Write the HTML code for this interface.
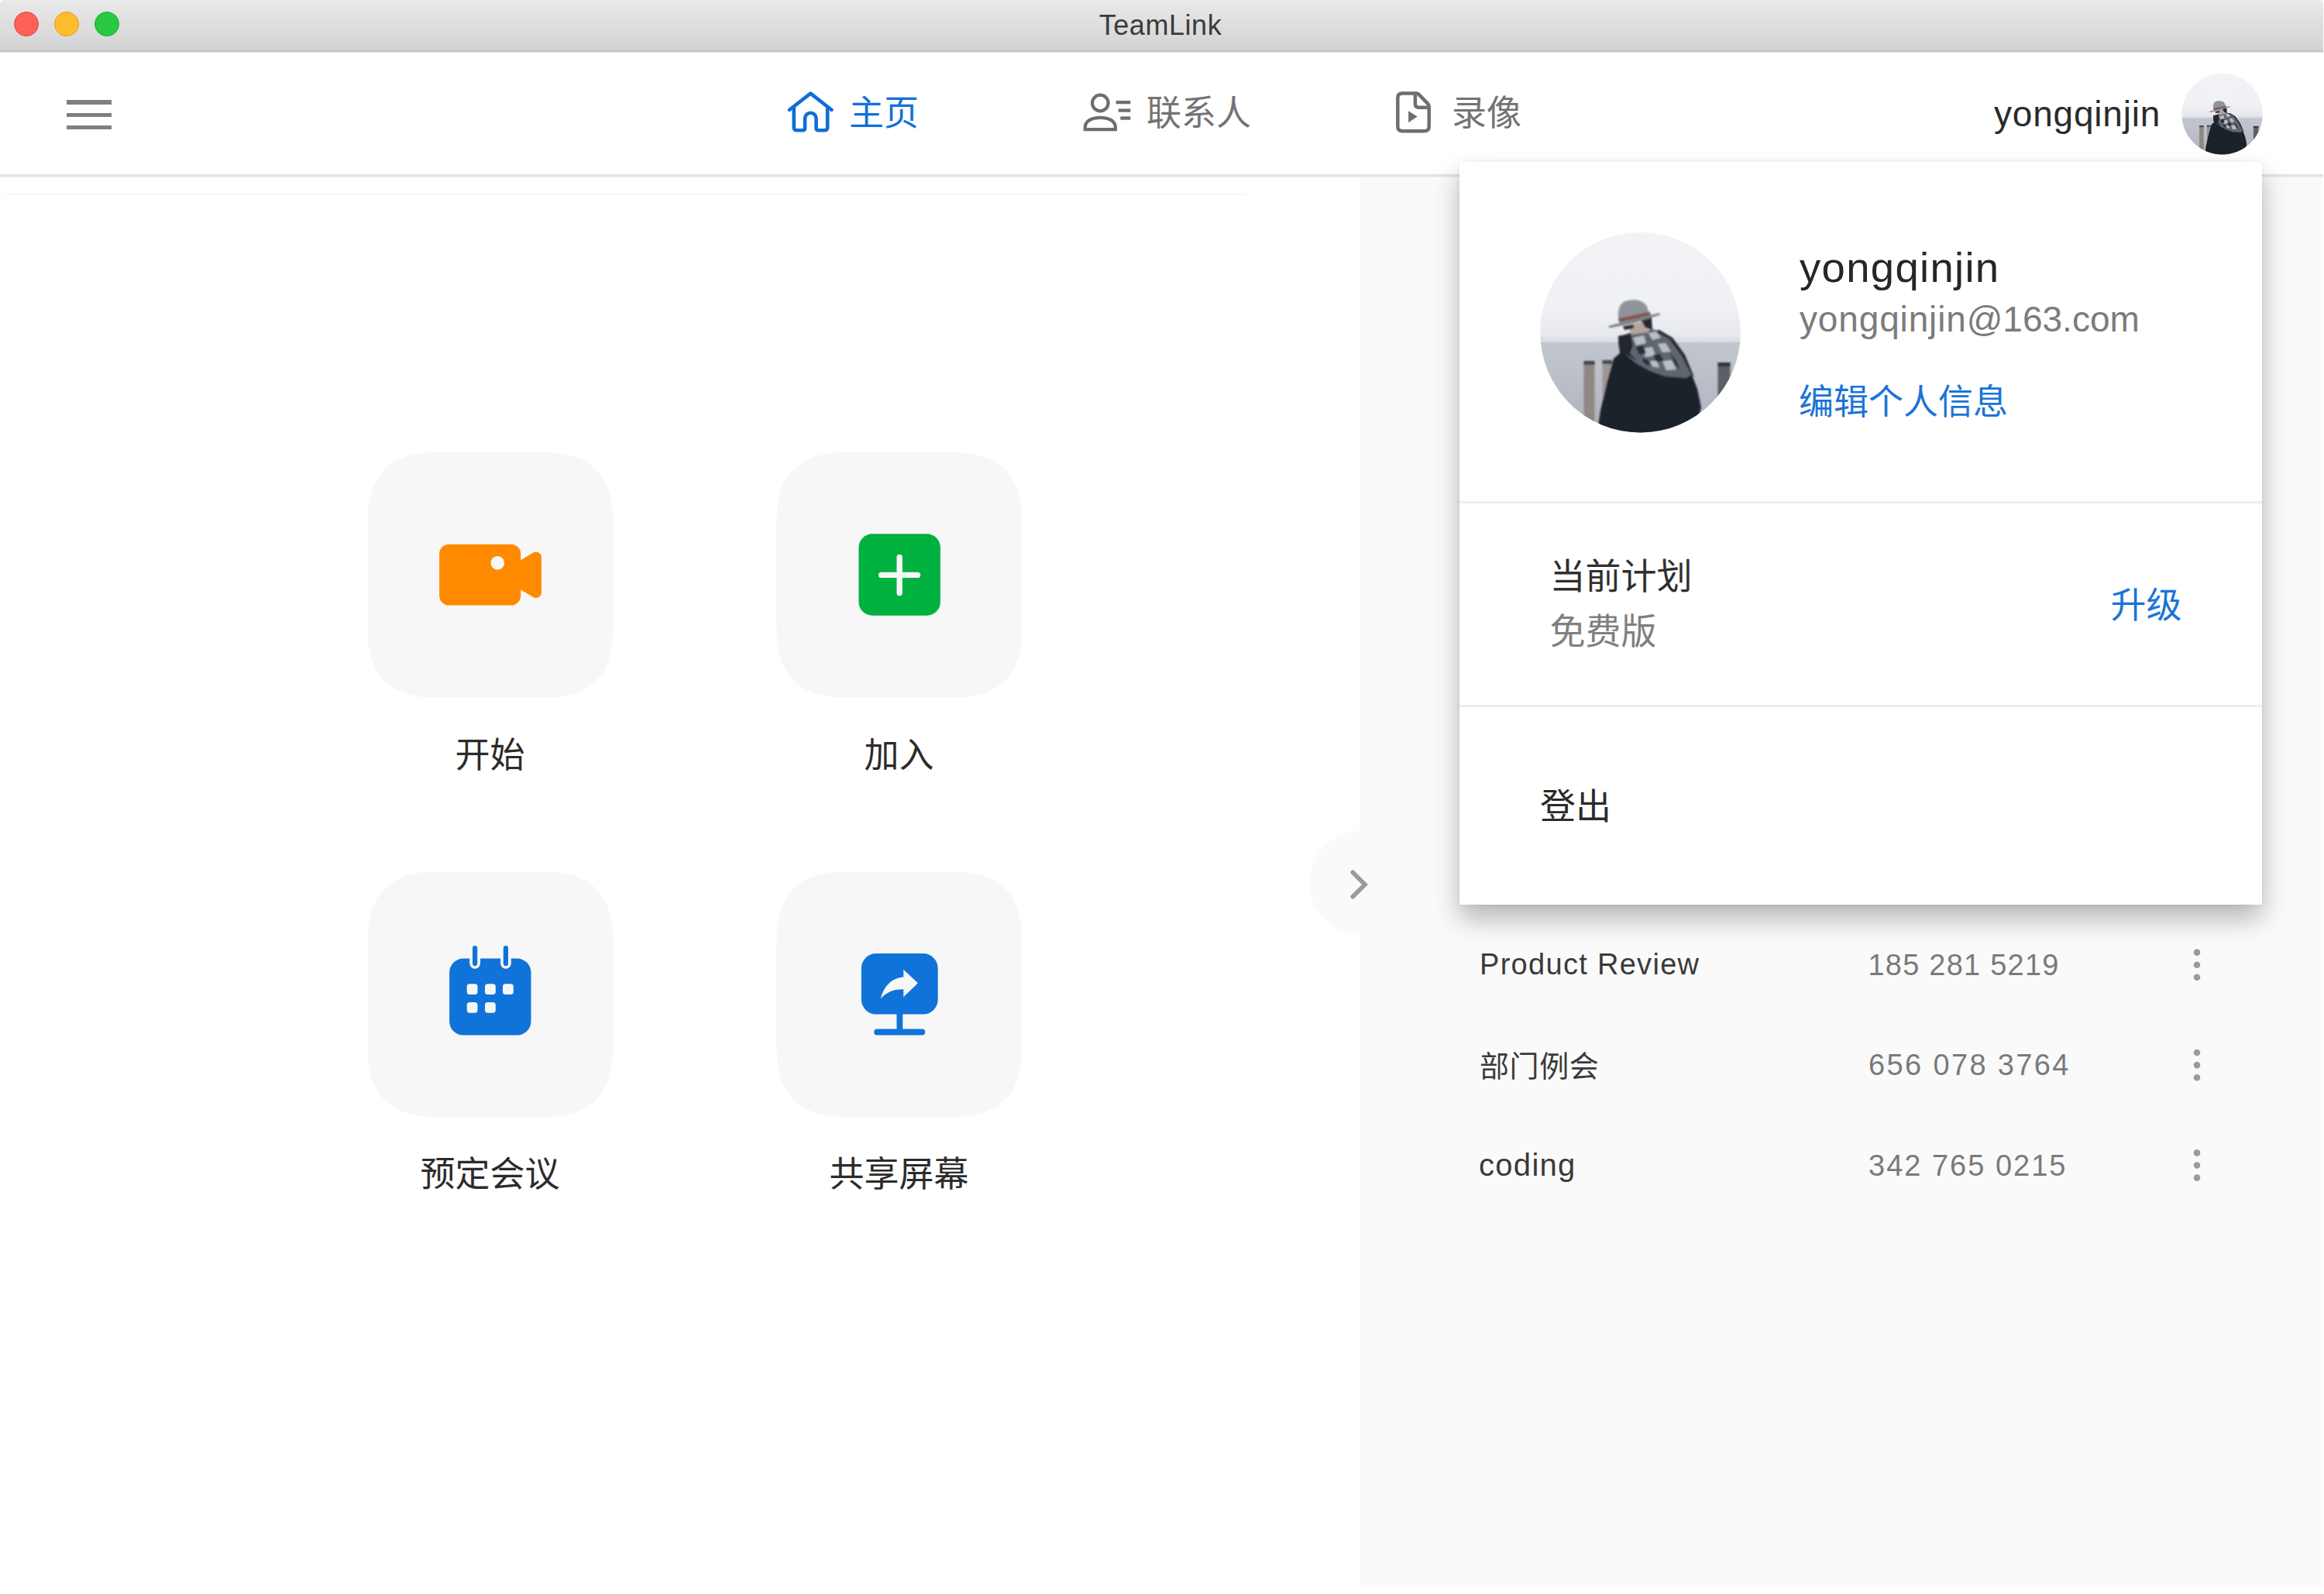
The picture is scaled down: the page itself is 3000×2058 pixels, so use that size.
<!DOCTYPE html>
<html lang="zh-CN">
<head>
<meta charset="utf-8">
<title>TeamLink</title>
<style>
*{box-sizing:border-box;margin:0;padding:0}
html,body{width:3000px;height:2058px;overflow:hidden;background:#fff}
body{position:relative;font-family:"Liberation Sans","Noto Sans CJK SC",sans-serif;color:#2b2b2b}
.abs{position:absolute}
.t{position:absolute;white-space:nowrap;line-height:1}
/* title bar */
#titlebar{position:absolute;left:0;top:0;width:2998.5px;height:67px;background:linear-gradient(#e9e9e9,#d3d3d3);border-bottom:2px solid #c3c3c3;border-radius:5px 5px 0 0;box-shadow:0 1px 0 #e4e4e4}
.tl{position:absolute;top:15px;width:32px;height:32px;border-radius:50%}
#title{left:0;width:2996px;text-align:center;top:15px;font-size:36px;letter-spacing:.55px;color:#3b3b3b}
/* header */
#header{position:absolute;left:0;top:68px;width:2998.5px;height:157px;background:#fff}
#hline{position:absolute;left:0;top:225px;width:2998.5px;height:4px;background:linear-gradient(#e0e0e0,#e2e2e2 45%,#ededed)}
.hb{position:absolute;left:86px;width:58px;height:5.4px;background:#7f7f7f}
.nav{font-size:45px;color:#737373}
.nav.on{color:#1071d8}
/* main */
#side{position:absolute;left:1754.5px;top:229px;width:1244px;height:1820px;background:#fafafa}
#hair{position:absolute;left:7px;top:250px;width:1601px;height:2px;background:#f6f6f6}
.tile{position:absolute;width:317px;height:317px;border-radius:82px;background:#f7f7f7}
.lbl{font-size:45px;color:#2b2b2b;text-align:center;width:317px}
/* list */
.row{font-size:38px}
.row.n{color:#3a3a3a}
.row.d{color:#7a7a7a}
.dot{position:absolute;width:7px;height:7px;border-radius:50%;background:#777}
/* popup */
#pop{position:absolute;left:1884px;top:209px;width:1036px;height:959px;background:#fff;border-radius:5px 5px 1px 1px;box-shadow:0 18px 34px rgba(0,0,0,.28),0 0 6px rgba(0,0,0,.06)}
.div{position:absolute;left:0;width:1036px;height:3px;background:#eeeeee}
</style>
</head>
<body>
<div id="titlebar">
  <div class="tl" style="left:18px;background:#fe5f57;border:1px solid #e2463f"></div>
  <div class="tl" style="left:70px;background:#febc2e;border:1px solid #e0a028"></div>
  <div class="tl" style="left:122px;background:#28c840;border:1px solid #1eab31"></div>
  <div class="t" id="title">TeamLink</div>
</div>
<div id="header">
  <div class="hb" style="top:61.2px"></div>
  <div class="hb" style="top:77.6px"></div>
  <div class="hb" style="top:93.9px"></div>
</div>
<!-- NAV -->
<div class="t nav on" style="left:1096px;top:124px">主页</div>
<div class="t nav" style="left:1480px;top:124px">联系人</div>
<div class="t nav" style="left:1874px;top:124px">录像</div>
<div class="t" id="uname" style="left:2574px;top:124px;font-size:46px;letter-spacing:.8px;color:#2b2b2b">yongqinjin</div>

<div class="abs" style="left:2809.0px;top:86.8px;width:300px;height:300px;transform:scale(0.4037);transform-origin:0 0"><svg class="abs" style="left:0;top:0;overflow:visible" width="300" height="300" viewBox="0 0 300 300">
  <defs>
    <clipPath id="Bc"><circle cx="147.5" cy="149.2" r="129.3"/></clipPath>
    <linearGradient id="Bsky" x1="0" y1="0" x2="0" y2="1"><stop offset="0" stop-color="#f2f3f5"/><stop offset=".7" stop-color="#f0f1f4"/><stop offset=".93" stop-color="#e7e9ed"/><stop offset="1" stop-color="#d3d6dc"/></linearGradient>
    <linearGradient id="Bsea" x1="0" y1="0" x2="0" y2="1"><stop offset="0" stop-color="#c2c6ce"/><stop offset=".25" stop-color="#bcc1ca"/><stop offset="1" stop-color="#a9afba"/></linearGradient>
    <filter id="Bb" x="-10%" y="-10%" width="120%" height="120%"><feGaussianBlur stdDeviation="1.2"/></filter>
  </defs>
  <g clip-path="url(#Bc)">
    <rect x="0" y="0" width="300" height="164" fill="url(#Bsky)"/>
    <rect x="0" y="162" width="300" height="140" fill="url(#Bsea)"/>
    <g filter="url(#Bb)">
      <rect x="74.500" y="187" width="14" height="100" fill="#8f8885"/>
      <rect x="74.500" y="186" width="14" height="5" fill="#3f454d"/>
      <rect x="98.500" y="186" width="12.500" height="100" fill="#9d9794"/>
      <rect x="98.500" y="185" width="12.500" height="5" fill="#444a52"/>
      <rect x="247.500" y="189" width="16" height="100" fill="#5a5f68"/>
      <rect x="247.500" y="188" width="16" height="5" fill="#2f353d"/>
      <path d="M90 290 L96 250 L104 215 L113 183 L121 176 L119 156 L133 150 L166 146 L186 160 L205 188 L214 204 L221 222 L226 246 L222 262 L214 290 Z" fill="#1a212c"/>
      <path d="M119 154 L137 150 L164 145 L183 155 L200 176 L214 203 L207 208 L180 206 L160 199 L142 189 L128 177 L120 170 Z" fill="#5f6670"/>
      <path d="M119 154 L135 151 L138 166 L134 176 L144 186 L128 177 L120 170 Z" fill="#20262f"/>
      <path d="M138 156 l14 -3 l3 10 l-13 3 Z M158 150 l10 -2 l6 8 l-11 3 Z M150 170 l13 -2 l4 11 l-13 2 Z M170 164 l10 -1 l7 11 l-11 1 Z M176 186 l12 -1 l6 12 l-13 1 Z M160 186 l9 0 l3 9 l-9 -2 Z" fill="#b9bec5"/>
      <path d="M166 147 L185 158 L201 180 L213 203 L217 207 L205 178 L189 156 L172 146 Z" fill="#252c36"/>
      <path d="M142 168 l9 -2 l4 10 l-9 2 Z M164 178 l9 -1 l5 9 l-10 1 Z M186 176 l8 10 l5 12 l-8 -9 Z M150 182 l8 3 l2 8 l-9 -5 Z" fill="#262d37"/>
      <path d="M131 140 L156 134 L158 149 L136 152 Z" fill="#b5a39b"/>
      <path d="M146 132 L162 130 L163 146 L154 143 L150 136 Z" fill="#232830"/>
      <path d="M125 141 L139 139 L139 144 L127 146 Z" fill="#2b3038"/>
      <path d="M119 133 C118 118 121 110 131 108 C142 106 152 108 156 116 L160 129 L121 138 Z" fill="#8f949c"/>
      <path d="M119.500 131 L160 122.500 L161 127 L120.500 136 Z" fill="#86544a"/>
      <path d="M106 141 L172 124 L173 126.500 L140 137 L108 143.500 Z" fill="#7d828b"/>
    </g>
  </g>
</svg></div>
<div id="hline"></div>
<div id="side"></div>
<div id="hair"></div>

<!-- TILES -->
<div class="t lbl" style="left:474px;top:953px">开始</div>
<div class="t lbl" style="left:1002px;top:953px">加入</div>
<div class="t lbl" style="left:474px;top:1494px">预定会议</div>
<div class="t lbl" style="left:1002px;top:1494px">共享屏幕</div>


<!-- ICONS -->
<svg class="abs" style="left:0;top:0" width="3000" height="2058" viewBox="0 0 3000 2058">
  <!-- tiles -->
  <path d="M564.4 583.9 H701.4 C762.6 583.9 791.4 612.7 791.4 673.9 V810.9 C791.4 872.1 762.6 900.9 701.4 900.9 H564.4 C503.2 900.9 474.4 872.1 474.4 810.9 V673.9 C474.4 612.7 503.2 583.9 564.4 583.9 Z" fill="#f7f7f7"/>
  <path d="M1092.4 583.9 H1229.4 C1290.6 583.9 1319.4 612.7 1319.4 673.9 V810.9 C1319.4 872.1 1290.6 900.9 1229.4 900.9 H1092.4 C1031.2 900.9 1002.4 872.1 1002.4 810.9 V673.9 C1002.4 612.7 1031.2 583.9 1092.4 583.9 Z" fill="#f7f7f7"/>
  <path d="M564.4 1125.2 H701.4 C762.6 1125.2 791.4 1154.0 791.4 1215.2 V1352.2 C791.4 1413.4 762.6 1442.2 701.4 1442.2 H564.4 C503.2 1442.2 474.4 1413.4 474.4 1352.2 V1215.2 C474.4 1154.0 503.2 1125.2 564.4 1125.2 Z" fill="#f7f7f7"/>
  <path d="M1092.4 1125.2 H1229.4 C1290.6 1125.2 1319.4 1154.0 1319.4 1215.2 V1352.2 C1319.4 1413.4 1290.6 1442.2 1229.4 1442.2 H1092.4 C1031.2 1442.2 1002.4 1413.4 1002.4 1352.2 V1215.2 C1002.4 1154.0 1031.2 1125.2 1092.4 1125.2 Z" fill="#f7f7f7"/>
  <!-- home -->
  <g fill="none" stroke="#0f6ed6" stroke-width="4.6" stroke-linecap="round" stroke-linejoin="round">
    <path d="M1019.2 141.8 L1046.3 120.6 L1073.4 141.8"/>
    <path d="M1024.8 138 V164.3 Q1024.8 168.3 1028.8 168.3 H1036 Q1039.1 168.3 1039.1 165.2 V153 A7.25 7.25 0 0 1 1053.6 153 V165.2 Q1053.6 168.3 1056.7 168.3 H1064.2 Q1068.2 168.3 1068.2 164.3 V138"/>
  </g>
  <!-- contacts -->
  <g fill="none" stroke="#6e6e6e" stroke-width="4.2">
    <circle cx="1420.3" cy="133" r="10.3"/>
    <path d="M1400.7 167.1 V164.5 C1400.7 156.5 1409 151.8 1420.3 151.8 C1431.6 151.8 1439.9 156.5 1439.9 164.5 V167.1 Z" stroke-linejoin="miter"/>
  </g>
  <g fill="#6e6e6e">
    <rect x="1440.6" y="130" width="18.7" height="4.3"/>
    <rect x="1443.7" y="140.4" width="15.6" height="4.3"/>
    <rect x="1446.3" y="150.4" width="13" height="4.3"/>
  </g>
  <!-- file -->
  <g fill="none" stroke="#6e6e6e" stroke-width="4.5" stroke-linejoin="round" stroke-linecap="round">
    <path d="M1810.3 120.6 H1828 Q1830.3 120.6 1832 122.3 L1843.1 133.9 Q1844.7 135.6 1844.7 138 V163.2 Q1844.7 169.2 1838.7 169.2 H1810.3 Q1804.3 169.2 1804.3 163.2 V126.6 Q1804.3 120.6 1810.3 120.6 Z"/>
    <path d="M1826.9 121.5 V134.2 Q1826.9 138.7 1831.4 138.7 H1844"/>
  </g>
  <path d="M1818.1 143.2 V158.2 L1829.7 150.6 Z" fill="#6e6e6e"/>

  <!-- collapse -->
  <circle cx="1756.8" cy="1140" r="67" fill="#fafafa"/>
  <path d="M1746.2 1126.2 L1762 1142 L1746.2 1157.8" fill="none" stroke="#9a9a9a" stroke-width="5.6" stroke-linecap="round" stroke-linejoin="miter"/>

  <!-- camera -->
  <rect x="567.1" y="702.7" width="105.1" height="78.9" rx="12.5" fill="#ff8a00"/>
  <path d="M668 733.7 L692 719.5 V765 L668 750.8 Z" fill="#ff8a00" stroke="#ff8a00" stroke-width="14" stroke-linejoin="round"/>
  <circle cx="642.3" cy="726.7" r="8.8" fill="#f7f7f7"/>
  <!-- plus -->
  <rect x="1108.5" y="689.3" width="105.4" height="105.4" rx="17.5" fill="#00b140"/>
  <g stroke="#f7f7f7" stroke-width="7.4" stroke-linecap="round">
    <path d="M1137.7 742.4 H1184.5"/>
    <path d="M1161.2 719.4 V765.5"/>
  </g>
  <!-- calendar -->
  <rect x="580.1" y="1237.6" width="105.4" height="98.9" rx="18" fill="#1073d9"/>
  <g stroke="#f7f7f7" stroke-width="13.8" stroke-linecap="round">
    <path d="M613.1 1230 V1243.8"/>
    <path d="M652.9 1230 V1243.8"/>
  </g>
  <rect x="606.2" y="1215" width="13.8" height="22.6" fill="#f7f7f7"/>
  <rect x="646" y="1215" width="13.8" height="22.6" fill="#f7f7f7"/>
  <g stroke="#1073d9" stroke-width="6.2" stroke-linecap="round">
    <path d="M613.1 1224 V1244.1"/>
    <path d="M652.9 1224 V1244.1"/>
  </g>
  <g fill="#f7f7f7">
    <rect x="602.7" y="1270.3" width="13.8" height="13.8" rx="3.6"/>
    <rect x="626" y="1270.3" width="13.8" height="13.8" rx="3.6"/>
    <rect x="649" y="1270.3" width="13.8" height="13.8" rx="3.6"/>
    <rect x="602.7" y="1293.9" width="13.8" height="13.8" rx="3.6"/>
    <rect x="626" y="1293.9" width="13.8" height="13.8" rx="3.6"/>
  </g>
  <!-- share screen -->
  <rect x="1111.9" y="1231.1" width="98.8" height="78.5" rx="19" fill="#1073d9"/>
  <rect x="1157.5" y="1305" width="7.8" height="27" fill="#1073d9"/>
  <rect x="1128.2" y="1328.5" width="66" height="8" rx="4" fill="#1073d9"/>
  <path d="M1166.3 1251.7 L1184.9 1269.3 L1166.3 1287.3 V1277.3 Q1148 1276.3 1136.7 1289.3 Q1143.5 1263.8 1166.3 1261.2 Z" fill="#f7f7f7"/>

  <!-- kebabs -->
  <g fill="#9a9a9a">
    <circle cx="2836" cy="1229.6" r="4.3"/><circle cx="2836" cy="1245.7" r="4.3"/><circle cx="2836" cy="1261.8" r="4.3"/>
    <circle cx="2836" cy="1359" r="4.3"/><circle cx="2836" cy="1375.1" r="4.3"/><circle cx="2836" cy="1391.2" r="4.3"/>
    <circle cx="2836" cy="1488.4" r="4.3"/><circle cx="2836" cy="1504.5" r="4.3"/><circle cx="2836" cy="1520.6" r="4.3"/>
  </g>
</svg>

<!-- LIST -->
<div class="t row n" style="left:1910px;top:1225.5px;letter-spacing:1.3px">Product Review</div>
<div class="t row d" style="left:2411.5px;top:1226.5px;letter-spacing:1.22px">185 281 5219</div>
<div class="t row n" style="left:1910px;top:1357.5px;letter-spacing:.6px">部门例会</div>
<div class="t row d" style="left:2412px;top:1355.5px;letter-spacing:2.36px">656 078 3764</div>
<div class="t row n" style="left:1909px;top:1484px;font-size:40px;letter-spacing:1.3px">coding</div>
<div class="t row d" style="left:2412px;top:1485.5px;letter-spacing:2px">342 765 0215</div>

<!-- POPUP -->
<div id="pop">
  <div class="abs" style="left:86px;top:71px;width:300px;height:300px"><svg class="abs" style="left:0;top:0;overflow:visible" width="300" height="300" viewBox="0 0 300 300">
  <defs>
    <clipPath id="Ac"><circle cx="147.5" cy="149.2" r="129.3"/></clipPath>
    <linearGradient id="Asky" x1="0" y1="0" x2="0" y2="1"><stop offset="0" stop-color="#f2f3f5"/><stop offset=".7" stop-color="#f0f1f4"/><stop offset=".93" stop-color="#e7e9ed"/><stop offset="1" stop-color="#d3d6dc"/></linearGradient>
    <linearGradient id="Asea" x1="0" y1="0" x2="0" y2="1"><stop offset="0" stop-color="#c2c6ce"/><stop offset=".25" stop-color="#bcc1ca"/><stop offset="1" stop-color="#a9afba"/></linearGradient>
    <filter id="Ab" x="-10%" y="-10%" width="120%" height="120%"><feGaussianBlur stdDeviation="1.2"/></filter>
  </defs>
  <g clip-path="url(#Ac)">
    <rect x="0" y="0" width="300" height="164" fill="url(#Asky)"/>
    <rect x="0" y="162" width="300" height="140" fill="url(#Asea)"/>
    <g filter="url(#Ab)">
      <rect x="74.500" y="187" width="14" height="100" fill="#8f8885"/>
      <rect x="74.500" y="186" width="14" height="5" fill="#3f454d"/>
      <rect x="98.500" y="186" width="12.500" height="100" fill="#9d9794"/>
      <rect x="98.500" y="185" width="12.500" height="5" fill="#444a52"/>
      <rect x="247.500" y="189" width="16" height="100" fill="#5a5f68"/>
      <rect x="247.500" y="188" width="16" height="5" fill="#2f353d"/>
      <path d="M90 290 L96 250 L104 215 L113 183 L121 176 L119 156 L133 150 L166 146 L186 160 L205 188 L214 204 L221 222 L226 246 L222 262 L214 290 Z" fill="#1a212c"/>
      <path d="M119 154 L137 150 L164 145 L183 155 L200 176 L214 203 L207 208 L180 206 L160 199 L142 189 L128 177 L120 170 Z" fill="#5f6670"/>
      <path d="M119 154 L135 151 L138 166 L134 176 L144 186 L128 177 L120 170 Z" fill="#20262f"/>
      <path d="M138 156 l14 -3 l3 10 l-13 3 Z M158 150 l10 -2 l6 8 l-11 3 Z M150 170 l13 -2 l4 11 l-13 2 Z M170 164 l10 -1 l7 11 l-11 1 Z M176 186 l12 -1 l6 12 l-13 1 Z M160 186 l9 0 l3 9 l-9 -2 Z" fill="#b9bec5"/>
      <path d="M166 147 L185 158 L201 180 L213 203 L217 207 L205 178 L189 156 L172 146 Z" fill="#252c36"/>
      <path d="M142 168 l9 -2 l4 10 l-9 2 Z M164 178 l9 -1 l5 9 l-10 1 Z M186 176 l8 10 l5 12 l-8 -9 Z M150 182 l8 3 l2 8 l-9 -5 Z" fill="#262d37"/>
      <path d="M131 140 L156 134 L158 149 L136 152 Z" fill="#b5a39b"/>
      <path d="M146 132 L162 130 L163 146 L154 143 L150 136 Z" fill="#232830"/>
      <path d="M125 141 L139 139 L139 144 L127 146 Z" fill="#2b3038"/>
      <path d="M119 133 C118 118 121 110 131 108 C142 106 152 108 156 116 L160 129 L121 138 Z" fill="#8f949c"/>
      <path d="M119.500 131 L160 122.500 L161 127 L120.500 136 Z" fill="#86544a"/>
      <path d="M106 141 L172 124 L173 126.500 L140 137 L108 143.500 Z" fill="#7d828b"/>
    </g>
  </g>
</svg></div>
  <div class="div" style="top:438px"></div>
  <div class="div" style="top:701px"></div>
  <div class="t" style="left:439px;top:110px;font-size:54.5px;letter-spacing:1.3px;color:#262626">yongqinjin</div>
  <div class="t" style="left:439px;top:180px;font-size:46px;letter-spacing:.85px;color:#7b7b7b">yongqinjin<span style="letter-spacing:0">@163.com</span></div>
  <div class="t" style="left:438px;top:287.5px;font-size:45px;color:#1a74d6">编辑个人信息</div>
  <div class="t" style="left:116.5px;top:512px;font-size:46px;color:#303030">当前计划</div>
  <div class="t" style="left:116.6px;top:583px;font-size:46px;color:#808080">免费版</div>
  <div class="t" style="left:840.5px;top:548.5px;font-size:46px;color:#1a74d6">升级</div>
  <div class="t" style="left:104px;top:808.5px;font-size:46px;color:#2b2b2b">登出</div>
</div>
</body>
</html>
